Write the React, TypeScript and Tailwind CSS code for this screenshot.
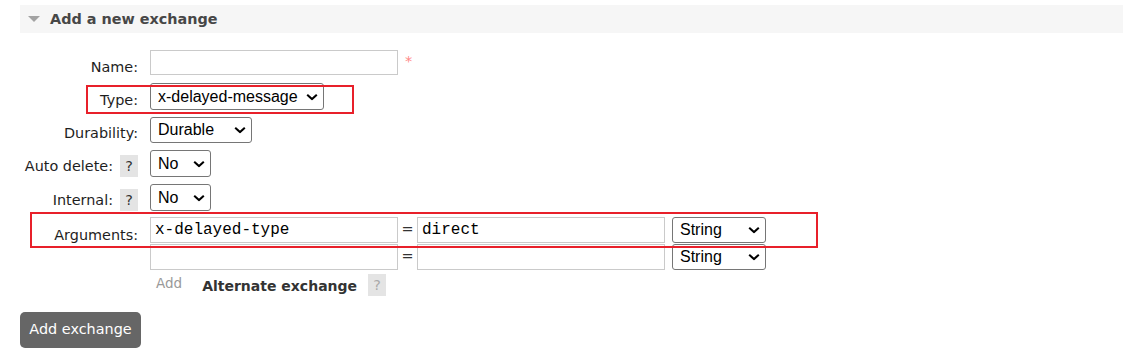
import type { ReactNode } from "react";

function Chevron() {
  return (
    <svg
      width="12"
      height="7"
      viewBox="0 0 12 7"
      className="pointer-events-none absolute right-[6px] top-1/2 -translate-y-1/2"
    >
      <path d="M1.2 1.2 L6 5.6 L10.8 1.2" fill="none" stroke="#000" strokeWidth="2" />
    </svg>
  );
}

function Select({ value, options, className }: { value: string; options: string[]; className: string }) {
  return (
    <div className={`relative ${className}`}>
      <select
        defaultValue={value}
        className="h-full w-full appearance-none rounded-[3px] border border-[#767676] bg-white pl-[7px] font-['Liberation_Sans',Arial,sans-serif] text-[16px] text-black"
      >
        {options.map((o) => (
          <option key={o} value={o}>
            {o}
          </option>
        ))}
      </select>
      <Chevron />
    </div>
  );
}

function TextInput({ value, className }: { value?: string; className: string }) {
  return (
    <input
      type="text"
      defaultValue={value}
      className={`border border-[#cacaca] bg-white px-[4px] font-['Liberation_Mono','Courier_New',monospace] text-[16px] text-black ${className}`}
    />
  );
}

function Help({ light }: { light?: boolean }) {
  return (
    <span
      className={`inline-block h-[22px] w-[18px] bg-[#e4e4e4] text-center leading-[22px] ${
        light ? "text-[#aaa]" : "text-[#333]"
      }`}
    >
      ?
    </span>
  );
}

function Row({ label, labelClass, rowClass, children }: { label: ReactNode; labelClass: string; rowClass: string; children: ReactNode }) {
  return (
    <div className={`flex items-start ${rowClass}`}>
      <div className={`flex w-[118px] shrink-0 items-center justify-end ${labelClass}`}>{label}</div>
      <div className="ml-3 flex items-start">{children}</div>
    </div>
  );
}

function ArgRow({ k, v }: { k?: string; v?: string }) {
  return (
    <div className="flex h-[26px] items-center">
      <TextInput value={k} className="h-[26px] w-[248px]" />
      <span className="w-[19px] text-center text-[#333]">=</span>
      <TextInput value={v} className="h-[26px] w-[248px]" />
      <Select value="String" options={["String", "Number", "Boolean", "List"]} className="ml-[7px] h-[26px] w-[94px]" />
    </div>
  );
}

export default function App() {
  return (
    <div className="relative h-[359px] w-full overflow-hidden bg-white pt-[5px] font-['DejaVu_Sans',Verdana,sans-serif] text-[14.4px] text-[#1e1e1e]">
      <div className="ml-5 flex h-[28px] items-center bg-[#f6f6f6]">
        <svg width="12" height="6" viewBox="0 0 12 6" className="ml-[8px]">
          <polygon points="0,0 12,0 6,6" fill="#a3a3a3" />
        </svg>
        <h2 className="ml-[10px] pt-[1px] text-[14.4px] font-bold text-[#474747]">Add a new exchange</h2>
      </div>

      <form className="mt-[17px] pl-5" onSubmit={(e) => e.preventDefault()}>
        <Row label="Name:" rowClass="h-[33px]" labelClass="pt-[8px] leading-[18px]">
          <TextInput className="h-[25px] w-[248px]" />
          <span className="ml-[7px] mt-[4px] leading-none text-[#f88]">*</span>
        </Row>

        <Row label="Type:" rowClass="h-[34px]" labelClass="pt-[8px] leading-[18px]">
          <Select
            value="x-delayed-message"
            options={["direct", "fanout", "headers", "topic", "x-delayed-message"]}
            className="h-[27px] w-[174px]"
          />
        </Row>

        <Row label="Durability:" rowClass="h-[33px]" labelClass="pt-[7px] leading-[18px]">
          <Select value="Durable" options={["Durable", "Transient"]} className="h-[26px] w-[102px]" />
        </Row>

        <Row
          label={
            <>
              <span className="mr-[7px] leading-[22px]">Auto delete:</span>
              <Help />
            </>
          }
          rowClass="h-[34px]"
          labelClass="pt-[5px]"
        >
          <Select value="No" options={["No", "Yes"]} className="h-[27px] w-[61px]" />
        </Row>

        <Row
          label={
            <>
              <span className="mr-[7px] leading-[22px]">Internal:</span>
              <Help />
            </>
          }
          rowClass="h-[33px]"
          labelClass="pt-[5px]"
        >
          <Select value="No" options={["No", "Yes"]} className="h-[27px] w-[61px]" />
        </Row>

        <Row label="Arguments:" rowClass="" labelClass="pt-[9px] leading-[18px]">
          <div className="flex flex-col gap-[1px]">
            <ArgRow k="x-delayed-type" v="direct" />
            <ArgRow />
          </div>
        </Row>

        <div className="mt-[4px] flex items-start pl-[130px]">
          <span className="ml-[6px] text-[13.5px] leading-[18px] text-[#999]">Add</span>
          <span className="ml-[20px] pt-[1px] text-[14px] font-bold leading-[22px] text-[#333]">Alternate exchange</span>
          <span className="ml-[11px]">
            <Help light />
          </span>
        </div>

        <button
          type="submit"
          className="mt-[15px] h-[36px] w-[121px] rounded-[5px] bg-[#666] text-[14.4px] text-white"
        >
          Add exchange
        </button>
      </form>

      <div className="pointer-events-none absolute left-[86px] top-[85px] h-[29px] w-[268px] border-2 border-[#e8202a]" />
      <div className="pointer-events-none absolute left-[30px] top-[212px] h-[36px] w-[788px] border-2 border-[#e8202a]" />
    </div>
  );
}
